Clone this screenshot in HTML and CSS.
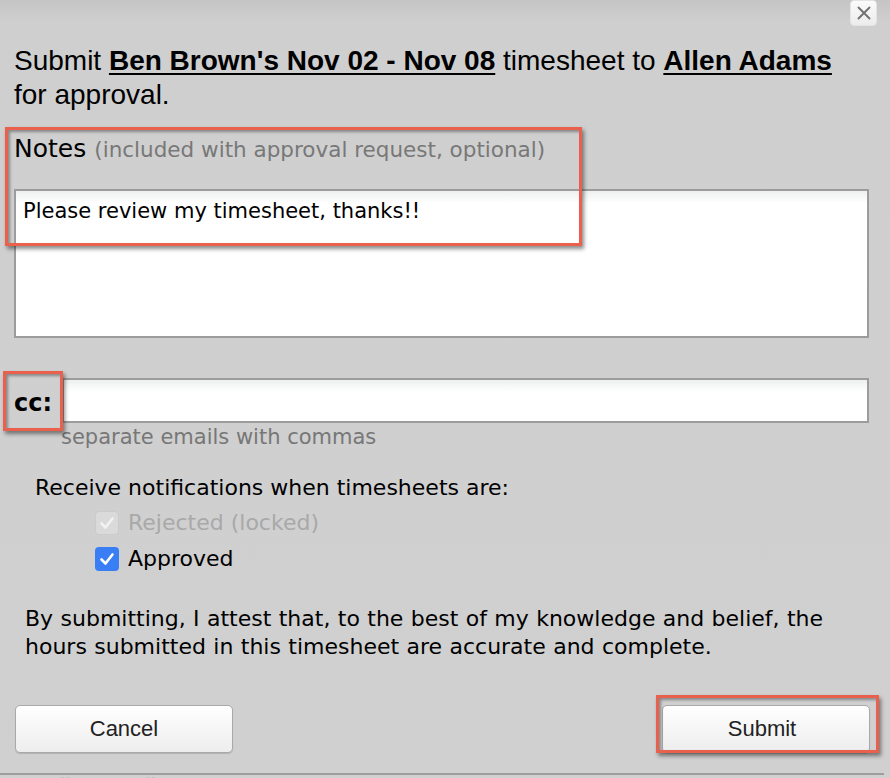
FILE: index.html
```html
<!DOCTYPE html>
<html lang="en">
<head>
<meta charset="utf-8">
<title>Submit timesheet</title>
<link rel="stylesheet" href="styles.css">
</head>
<body>
<div class="dialog">
  <button class="close" aria-label="Close">
    <svg width="16" height="16" viewBox="0 0 16 16"><path d="M2.5 2.5 L13.5 13.5 M13.5 2.5 L2.5 13.5" stroke="#707070" stroke-width="1.9" stroke-linecap="round"/></svg>
  </button>
  <h1 class="title">Submit <u><b>Ben Brown's Nov 02 - Nov 08</b></u> timesheet to <u><b>Allen Adams</b></u> for approval.</h1>

  <div class="notes-label"><span class="notes-word">Notes</span> <span class="muted">(included with approval request, optional)</span></div>
  <textarea class="notes">Please review my timesheet, thanks!!</textarea>

  <div class="cc-row">
    <span class="cc-label">cc:</span>
    <input class="cc-input" type="text">
  </div>
  <div class="hint">separate emails with commas</div>

  <div class="notify">
    <div class="notify-title">Receive notifications when timesheets are:</div>
    <div class="check-row disabled">
      <span class="box box-off"><svg width="18" height="18" viewBox="0 0 18 18"><path d="M3.5 9.5 L7.5 13.5 L14.5 4.5" fill="none" stroke="#f2f2f2" stroke-width="2.6" stroke-linecap="round" stroke-linejoin="round"/></svg></span>
      <span>Rejected (locked)</span>
    </div>
    <div class="check-row">
      <span class="box box-on"><svg width="18" height="18" viewBox="0 0 18 18"><path d="M3.5 9.5 L7.5 13.5 L14.5 4.5" fill="none" stroke="#fff" stroke-width="2.6" stroke-linecap="round" stroke-linejoin="round"/></svg></span>
      <span>Approved</span>
    </div>
  </div>

  <p class="attest">By submitting, I attest that, to the best of my knowledge and belief, the hours submitted in this timesheet are accurate and complete.</p>

  <div class="actions">
    <button class="btn">Cancel</button>
    <button class="btn btn-submit">Submit</button>
  </div>

  <div class="behind">ent Callsen, Callsen's Events</div>

  <div class="mark mark-notes"></div>
  <div class="mark mark-cc"></div>
  <div class="mark mark-submit"></div>
</div>
</body>
</html>
```

FILE: styles.css
```css
html, body {
  margin: 0;
  padding: 0;
}
body {
  width: 890px;
  height: 778px;
  overflow: hidden;
  background: linear-gradient(#c5c5c5 0px, #cfcfcf 22px, #d0d0d0 100%);
  font-family: "DejaVu Sans", Verdana, sans-serif;
  color: #000;
}
.dialog {
  position: relative;
  height: 778px;
  padding: 0 21px 0 14px;
  box-sizing: border-box;
}
.close {
  position: absolute;
  top: 0;
  right: 13px;
  width: 27px;
  height: 26px;
  padding: 0;
  border: 1px solid #e4e4e4;
  border-radius: 4px;
  background: linear-gradient(#fbfbfb, #ececec);
  display: flex;
  align-items: center;
  justify-content: center;
}
.title {
  margin: 0;
  padding-top: 44px;
  max-width: 840px;
  font-family: "Liberation Sans", Arial, sans-serif;
  font-weight: normal;
  font-size: 28px;
  line-height: 34px;
}
.title u {
  text-underline-offset: 3px;
  text-decoration-thickness: 2px;
}
.notes-label {
  margin-top: 22px;
  line-height: 30px;
  height: 30px;
  white-space: nowrap;
}
.notes-word {
  font-size: 25px;
}
.muted {
  color: #787878;
  font-size: 21.5px;
  margin-left: 3px;
}
.notes {
  display: block;
  margin: 25px 0 0 0;
  width: 855px;
  height: 149px;
  box-sizing: border-box;
  border: 2px solid #9c9c9c;
  background: linear-gradient(#eef0f0, #ffffff 12px);
  font-family: "DejaVu Sans", Verdana, sans-serif;
  font-size: 21px;
  line-height: 24px;
  padding: 8px 7px;
  resize: none;
  color: #000;
}
.cc-row {
  margin-top: 40px;
  display: flex;
  align-items: center;
  height: 45px;
}
.cc-label {
  width: 48px;
  font-weight: bold;
  font-size: 24px;
  line-height: 28px;
  padding-top: 4px;
}
.cc-input {
  width: 807px;
  height: 45px;
  box-sizing: border-box;
  border: 2px solid #9c9c9c;
  background: linear-gradient(#eef0f0, #ffffff 12px);
  margin: 0;
}
.hint {
  margin-left: 47px;
  color: #777;
  font-size: 21px;
  line-height: 28px;
}
.notify {
  margin: 23px 0 0 21px;
  font-size: 22px;
}
.notify-title {
  line-height: 28px;
}
.check-row {
  display: flex;
  align-items: center;
  gap: 9px;
  margin-left: 60px;
  height: 24px;
  line-height: 24px;
  margin-top: 12px;
}
.check-row + .check-row {
  margin-top: 12px;
}
.check-row.disabled {
  color: #a9a9a9;
  margin-top: 9px;
}
.box {
  width: 24px;
  height: 24px;
  border-radius: 4px;
  box-sizing: border-box;
  display: flex;
  align-items: center;
  justify-content: center;
  flex: none;
}
.box-off {
  background: #dadada;
  border: 1px solid #cbcbcb;
}
.box-on {
  background: #3a7ef5;
}
.attest {
  margin: 34px 0 0 11px;
  font-size: 22px;
  line-height: 28px;
  width: 830px;
  word-spacing: 0.4px;
}
.actions {
  margin-top: 44px;
  display: flex;
  justify-content: space-between;
  padding-left: 1px;
}
.btn {
  width: 218px;
  height: 48px;
  border: 1px solid #a9a9a9;
  border-radius: 5px;
  background: linear-gradient(#ffffff, #f6f6f6 50%, #ededed);
  box-shadow: 0 1px 1px rgba(0,0,0,0.15);
  font-family: "Liberation Sans", Arial, sans-serif;
  font-size: 22px;
  color: #222;
  padding: 0;
}
.btn-submit {
  width: 208px;
  margin-right: -1px;
  padding-right: 8px;
}
.behind {
  position: absolute;
  left: -6px;
  top: 773px;
  width: 890px;
  border-top: 2px solid #9d9d9d;
  color: #bcbcbc;
  font-size: 20px;
  line-height: 20px;
}
.mark {
  position: absolute;
  border: 3px solid #e9604d;
  box-shadow: 2px 3px 4px rgba(0,0,0,0.45), inset 2px 2px 3px rgba(0,0,0,0.35);
  box-sizing: border-box;
  pointer-events: none;
}
.mark-notes {
  left: 5px;
  top: 127px;
  width: 577px;
  height: 119px;
}
.mark-cc {
  left: 3px;
  top: 371px;
  width: 60px;
  height: 60px;
}
.mark-submit {
  left: 656px;
  top: 695px;
  width: 223px;
  height: 58px;
}
```
